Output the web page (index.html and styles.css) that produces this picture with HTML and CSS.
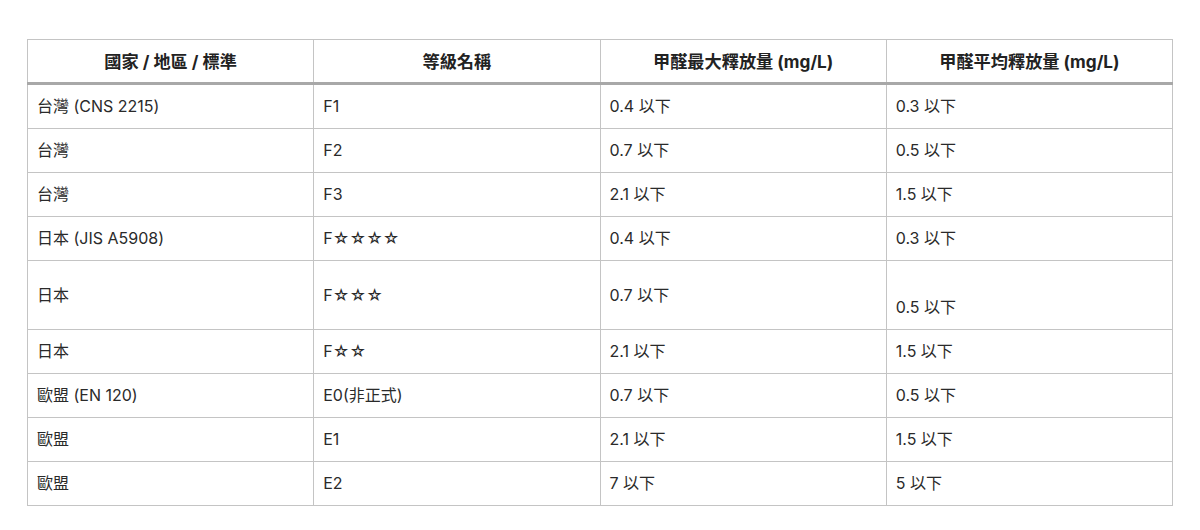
FILE: index.html
```html
<!DOCTYPE html>
<html lang="zh-Hant">
<head>
<meta charset="utf-8">
<link rel="stylesheet" href="styles.css">
</head>
<body>
<div class="wrap">
<table class="grade">
  <thead>
    <tr>
      <th>國家 / 地區 / 標準</th>
      <th>等級名稱</th>
      <th>甲醛最大釋放量 (mg/L)</th>
      <th>甲醛平均釋放量 (mg/L)</th>
    </tr>
  </thead>
  <tbody>
    <tr><td>台灣 (CNS 2215)</td><td>F1</td><td>0.4 以下</td><td>0.3 以下</td></tr>
    <tr><td>台灣</td><td>F2</td><td>0.7 以下</td><td>0.5 以下</td></tr>
    <tr><td>台灣</td><td>F3</td><td>2.1 以下</td><td>1.5 以下</td></tr>
    <tr><td>日本 (JIS A5908)</td><td>F☆☆☆☆</td><td>0.4 以下</td><td>0.3 以下</td></tr>
    <tr><td>日本</td><td>F☆☆☆</td><td>0.7 以下</td><td><br>0.5 以下</td></tr>
    <tr><td>日本</td><td>F☆☆</td><td>2.1 以下</td><td>1.5 以下</td></tr>
    <tr><td>歐盟 (EN 120)</td><td>E0(非正式)</td><td>0.7 以下</td><td>0.5 以下</td></tr>
    <tr><td>歐盟</td><td>E1</td><td>2.1 以下</td><td>1.5 以下</td></tr>
    <tr><td>歐盟</td><td>E2</td><td>7 以下</td><td>5 以下</td></tr>
  </tbody>
</table>
</div>
</body>
</html>
```
FILE: styles.css
```css
html, body {
  margin: 0;
  background: #fff;
}
body {
  font-family: Inter, "Noto Sans CJK TC", sans-serif;
  font-size: 16px;
  color: #2a2a2a;
}
.wrap {
  padding: 39px 27px;
}
.grade {
  width: 1146px;
  border-collapse: collapse;
  table-layout: fixed;
}
.grade th, .grade td {
  border: 1px solid #c4c4c4;
  padding: 9px 9px;
  line-height: 25px;
  vertical-align: middle;
}
.grade th {
  font-size: 17.2px;
  font-weight: 700;
  text-align: center;
  border-bottom: 3px solid #a8a8a8;
  color: #222;
  line-height: 23px;
  padding: 10px 9px 9px;
}
.grade td {
  text-align: left;
}
```
